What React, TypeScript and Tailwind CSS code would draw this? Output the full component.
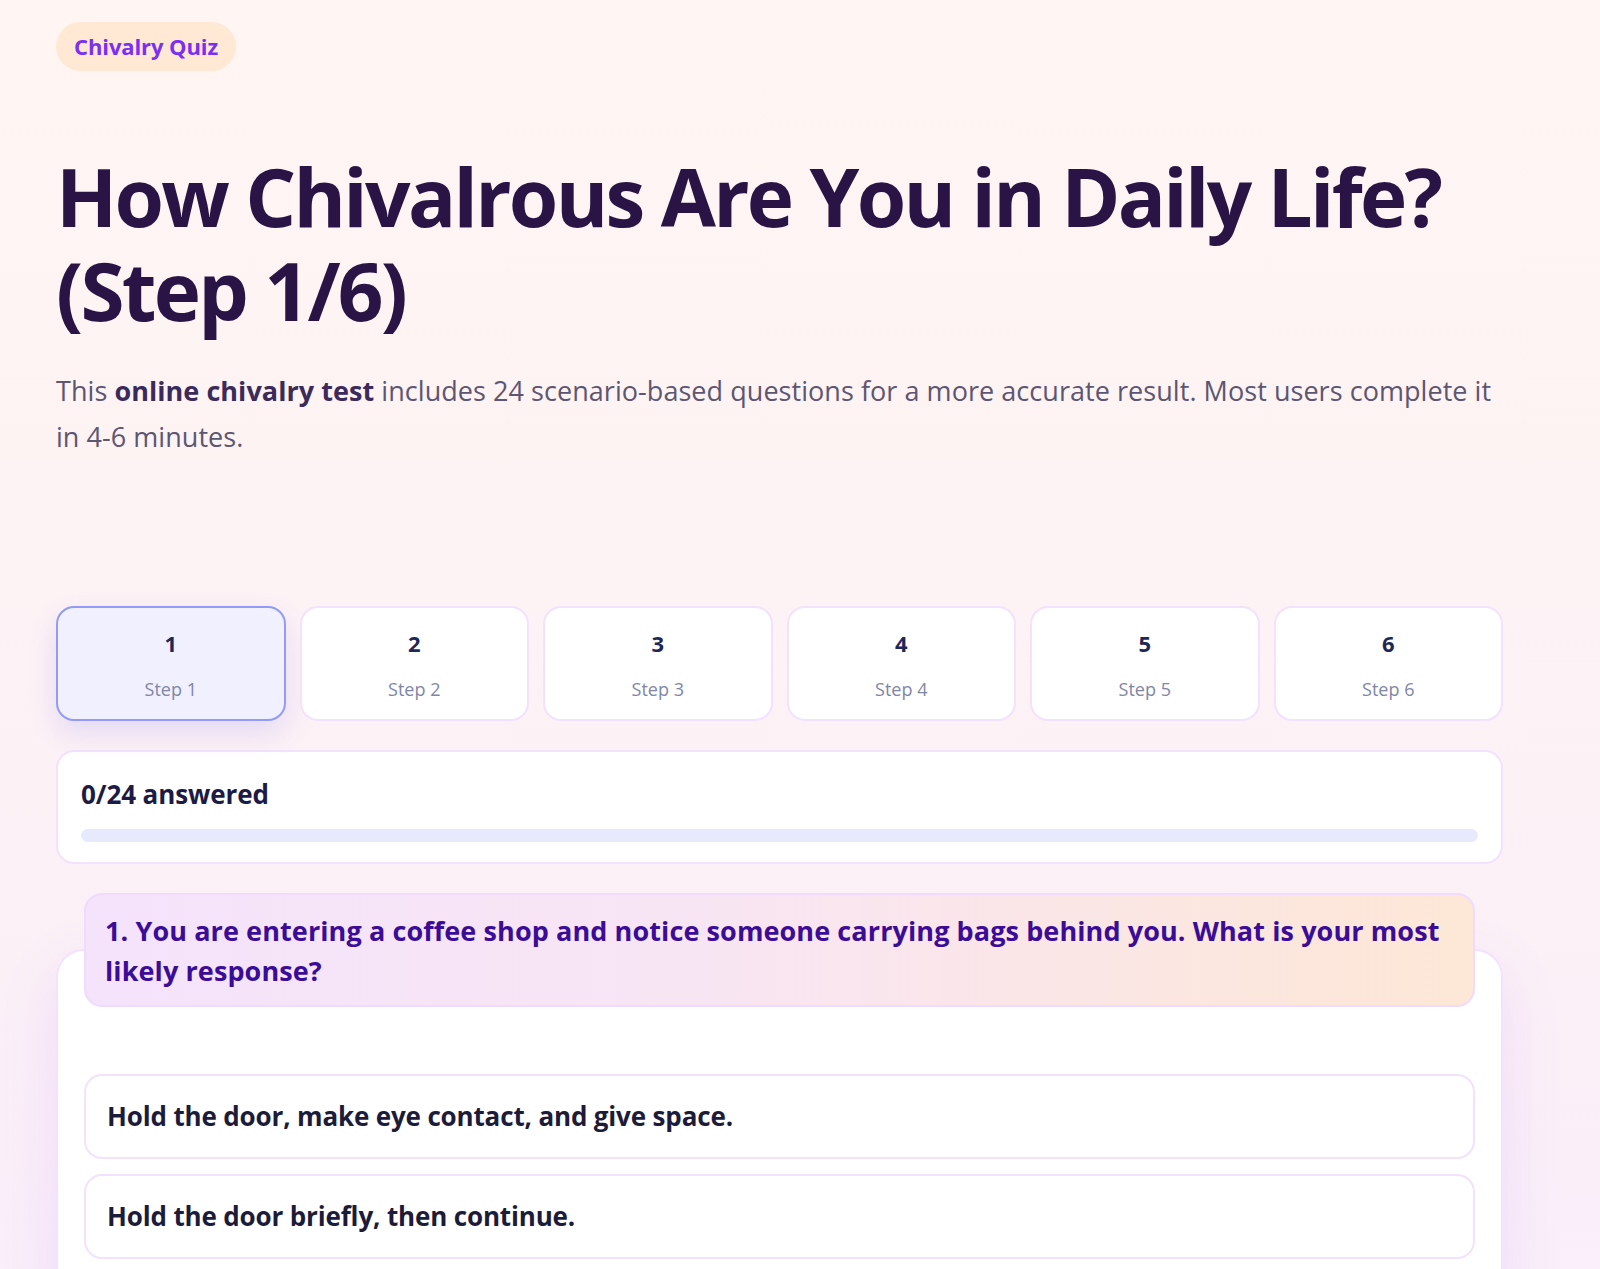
import React from "react";

const steps = [1, 2, 3, 4, 5, 6];

export default function App() {
  return (
    <div
      className="min-h-[1269px] w-full bg-[linear-gradient(180deg,#fff6f3_0%,#fdf2f4_45%,#fbf0f7_75%,#f9eefa_100%)]"
      style={{ fontFamily: '"Open Sans", "Noto Sans", sans-serif' }}
    >
      <div className="w-[1503px] pl-[56px] pt-[22px]">
        <div className="inline-flex h-[49px] items-center rounded-full bg-[#ffe9d5] px-[18px] text-[22px] font-bold tracking-[-0.1px] text-[#7a2ff3]">
          Chivalry Quiz
        </div>

        <h1 className="mt-[78px] text-[80px] font-bold leading-[94px] tracking-[-2.7px] text-[#2a1446]">
          How Chivalrous Are You in Daily Life?
          <br />
          (Step 1/6)
        </h1>

        <p className="mt-[31px] text-[27px] leading-[46px] tracking-[0.05px] text-[#5c5672]">
          This <strong className="font-bold text-[#3b2a5a]">online chivalry test</strong> includes 24
          scenario-based questions for a more accurate result. Most users complete it in 4-6 minutes.
        </p>

        <div className="mt-[146px] grid grid-cols-6 gap-[14px]">
          {steps.map((s) => {
            const active = s === 1;
            return (
              <div
                key={s}
                className={
                  active
                    ? "flex h-[115px] flex-col items-center rounded-[18px] border-2 border-[#939bf6] bg-[#f0f0ff] pt-[20px] shadow-[0_12px_28px_rgba(99,102,241,0.16)]"
                    : "flex h-[115px] flex-col items-center rounded-[18px] border-2 border-[#f2e2fe] bg-white pt-[20px]"
                }
              >
                <div className="text-[22px] font-bold leading-[30px] text-[#1f2757]">{s}</div>
                <div className="mt-[19px] text-[18px] leading-[24px] text-[#7f86a6]">Step {s}</div>
              </div>
            );
          })}
        </div>

        <div className="mt-[29px] h-[114px] rounded-[18px] border-2 border-[#f2e2fe] bg-white px-[23px] pt-[26px]">
          <div className="text-[26px] font-bold leading-[32px] tracking-[-0.1px] text-[#1d1b45]">0/24 answered</div>
          <div className="mt-[19px] h-[13px] w-full rounded-full bg-[#e7e9fc]" />
        </div>

        <div className="mt-[85px] rounded-[28px] border-2 border-[#f2e2fe] bg-white px-[26px] pb-[60px] shadow-[0_20px_60px_rgba(168,85,247,0.12)]">
          <div className="-mt-[58px] rounded-[18px] border-2 border-[#eedbfd] bg-[linear-gradient(90deg,#f4e3fb_0%,#f8e5f3_45%,#fde7d6_100%)] px-[19px] pb-[14px] pt-[16px]">
            <div className="text-[27px] font-bold leading-[40px] tracking-[0.1px] text-[#3a0c98]">
              1. You are entering a coffee shop and notice someone carrying bags behind you. What is your most
              likely response?
            </div>
          </div>

          <div className="mt-[67px] flex flex-col gap-[15px]">
            {["Hold the door, make eye contact, and give space.", "Hold the door briefly, then continue."].map(
              (t) => (
                <div
                  key={t}
                  className="flex h-[85px] items-center rounded-[18px] border-2 border-[#f2e2fe] bg-white px-[21px] text-[26px] font-bold tracking-[-0.15px] text-[#1d1b3a]"
                >
                  {t}
                </div>
              )
            )}
          </div>
        </div>
      </div>
    </div>
  );
}
